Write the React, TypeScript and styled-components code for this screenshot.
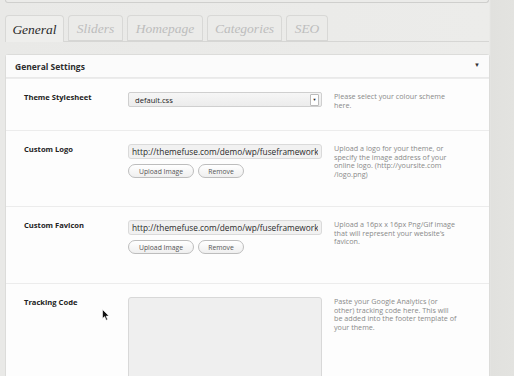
import React from 'react'
import styled, { createGlobalStyle } from 'styled-components'

const GlobalStyle = createGlobalStyle`
  html, body {
    margin: 0;
    padding: 0;
    background: linear-gradient(to right, #e9e9e7 0, #ececea 489px, #e1e1de 491px, #e3e3e0 100%);
    font-family: 'Open Sans', 'Liberation Sans', sans-serif;
    overflow: hidden;
  }
`

const Page = styled.div`
  position: relative;
  width: 514px;
  height: 376px;
  overflow: hidden;
`

const TopBar = styled.div`
  margin-left: 5px;
  width: 482px;
  height: 2px;
  background: #ebebe9;
  border: 1px solid #cfcfcd;
  border-top: none;
  border-radius: 0 0 4px 4px;
`

const TabBar = styled.div`
  display: flex;
  gap: 4px;
  margin: 12px 0 0 5px;
  width: 484px;
  height: 26px;
  border-bottom: 1px solid #d6d6d4;
`

const Tab = styled.div<{ $active?: boolean; $width: number }>`
  display: flex;
  align-items: center;
  justify-content: center;
  width: ${(p) => p.$width}px;
  height: ${(p) => (p.$active ? 27 : 26)}px;
  box-sizing: border-box;
  border: 1px solid #d8d8d6;
  border-bottom: ${(p) => (p.$active ? 'none' : '1px solid #d6d6d4')};
  border-radius: 4px 4px 0 0;
  background: ${(p) => (p.$active ? '#eeeeec' : '#ebebe9')};
  font-family: 'Liberation Serif', serif;
  font-style: italic;
  font-size: 13.5px;
  color: ${(p) => (p.$active ? '#2a2a2a' : '#bdbdbd')};
  padding-top: 1px;
`

const Panel = styled.div`
  margin: 12px 0 0 5px;
  width: 485px;
  box-sizing: border-box;
  background: #fdfdfd;
  border: 1px solid #dcdcda;
  border-radius: 3px 3px 0 0;
`

const PanelHeader = styled.div`
  display: flex;
  align-items: center;
  justify-content: space-between;
  height: 22px;
  padding: 0 9px 0 9px;
  background: #fbfbfb;
  border-bottom: 1px solid #e9e9e9;
  font-size: 8.5px;
  font-weight: 700;
  color: #2c2c2c;
`

const Caret = styled.span`
  font-size: 6px;
  color: #333;
  margin-top: -2px;
`

const Row = styled.div<{ $height: number }>`
  display: flex;
  height: ${(p) => p.$height}px;
  box-sizing: border-box;
  padding: 13px 0 0 18px;
  border-top: 1px solid #ececec;
  &:first-of-type {
    border-top: none;
  }
`

const Label = styled.div`
  width: 104px;
  font-size: 7.6px;
  font-weight: 700;
  color: #222;
  line-height: 9px;
  padding-top: 1px;
`

const Control = styled.div`
  display: flex;
  flex-direction: column;
  width: 194px;
  margin-right: 12px;
`

const Select = styled.div`
  display: flex;
  align-items: center;
  justify-content: space-between;
  height: 15px;
  box-sizing: border-box;
  padding: 0 2px 0 6px;
  border: 1px solid #cfcfcf;
  border-radius: 2px;
  background: linear-gradient(#f6f6f6, #ececec);
  font-size: 7.6px;
  color: #222;
`

const SelectArrow = styled.span`
  display: flex;
  align-items: center;
  justify-content: center;
  width: 7px;
  height: 10px;
  border: 1px solid #bbb;
  border-radius: 1px;
  background: #fff;
  font-size: 4px;
  color: #222;
`

const TextInput = styled.input`
  display: block;
  width: 194px;
  height: 15px;
  margin: 0;
  box-sizing: border-box;
  padding: 0 3px;
  border: 1px solid #dadada;
  border-radius: 3px;
  background: #f1f1f1;
  font-family: 'Open Sans', 'Liberation Sans', sans-serif;
  font-size: 8.3px;
  color: #2a2a2a;
  outline: none;
`

const Buttons = styled.div`
  display: flex;
  gap: 4px;
  margin-top: 5px;
`

const PillButton = styled.div<{ $width: number }>`
  display: flex;
  align-items: center;
  justify-content: center;
  width: ${(p) => p.$width}px;
  height: 14px;
  box-sizing: border-box;
  border: 1px solid #bdbdbd;
  border-radius: 8px;
  background: linear-gradient(#ffffff, #efefef);
  font-size: 6.8px;
  color: #555;
`

const TextArea = styled.div`
  height: 100px;
  box-sizing: border-box;
  border: 1px solid #d8d8d8;
  border-radius: 3px;
  background: #efefef;
`

const Help = styled.div`
  width: 130px;
  font-size: 7.2px;
  line-height: 8.6px;
  color: #8a8a8a;
  white-space: nowrap;
`

const Cursor = styled.svg`
  position: absolute;
  left: 102px;
  top: 309px;
`

const tabs = [
  { name: 'General', width: 59, active: true },
  { name: 'Sliders', width: 55 },
  { name: 'Homepage', width: 76 },
  { name: 'Categories', width: 75 },
  { name: 'SEO', width: 42 },
]

const url = 'http://themefuse.com/demo/wp/fuseframework/wp-content/themes/fuse/images/logo.png'

const HelpText: React.FC<{ lines: string[] }> = ({ lines }) => (
  <Help>
    {lines.map((l, i) => (
      <React.Fragment key={i}>
        {l}
        {i < lines.length - 1 && <br />}
      </React.Fragment>
    ))}
  </Help>
)

const UploadRow: React.FC<{ label: string; help: string[]; height: number }> = ({
  label,
  help,
  height,
}) => (
  <Row $height={height}>
    <Label>{label}</Label>
    <Control>
      <TextInput readOnly value={url} />
      <Buttons>
        <PillButton $width={66}>Upload Image</PillButton>
        <PillButton $width={46}>Remove</PillButton>
      </Buttons>
    </Control>
    <HelpText lines={help} />
  </Row>
)

const App: React.FC = () => {
  return (
    <Page>
      <GlobalStyle />
      <TopBar />
      <TabBar>
        {tabs.map((t) => (
          <Tab key={t.name} $active={t.active} $width={t.width}>
            {t.name}
          </Tab>
        ))}
      </TabBar>
      <Panel>
        <PanelHeader>
          <span>General Settings</span>
          <Caret>▼</Caret>
        </PanelHeader>
        <Row $height={52}>
          <Label>Theme Stylesheet</Label>
          <Control>
            <Select>
              <span>default.css</span>
              <SelectArrow>▼</SelectArrow>
            </Select>
          </Control>
          <HelpText lines={['Please select your colour scheme', 'here.']} />
        </Row>
        <UploadRow
          label="Custom Logo"
          height={76}
          help={[
            'Upload a logo for your theme, or',
            'specify the image address of your',
            'online logo. (http://yoursite.com',
            '/logo.png)',
          ]}
        />
        <UploadRow
          label="Custom Favicon"
          height={77}
          help={[
            'Upload a 16px x 16px Png/Gif image',
            'that will represent your website\u2019s',
            'favicon.',
          ]}
        />
        <Row $height={120}>
          <Label>Tracking Code</Label>
          <Control>
            <TextArea />
          </Control>
          <HelpText
            lines={[
              'Paste your Google Analytics (or',
              'other) tracking code here. This will',
              'be added into the footer template of',
              'your theme.',
            ]}
          />
        </Row>
      </Panel>
      <Cursor width="8" height="12" viewBox="0 0 8 12">
        <path d="M0.5 0.5 L0.5 9.5 L2.6 7.6 L4.2 11.2 L5.6 10.6 L4.1 7.1 L7 7 Z" fill="#111" stroke="#fff" strokeWidth="0.6" />
      </Cursor>
    </Page>
  )
}

export default App
